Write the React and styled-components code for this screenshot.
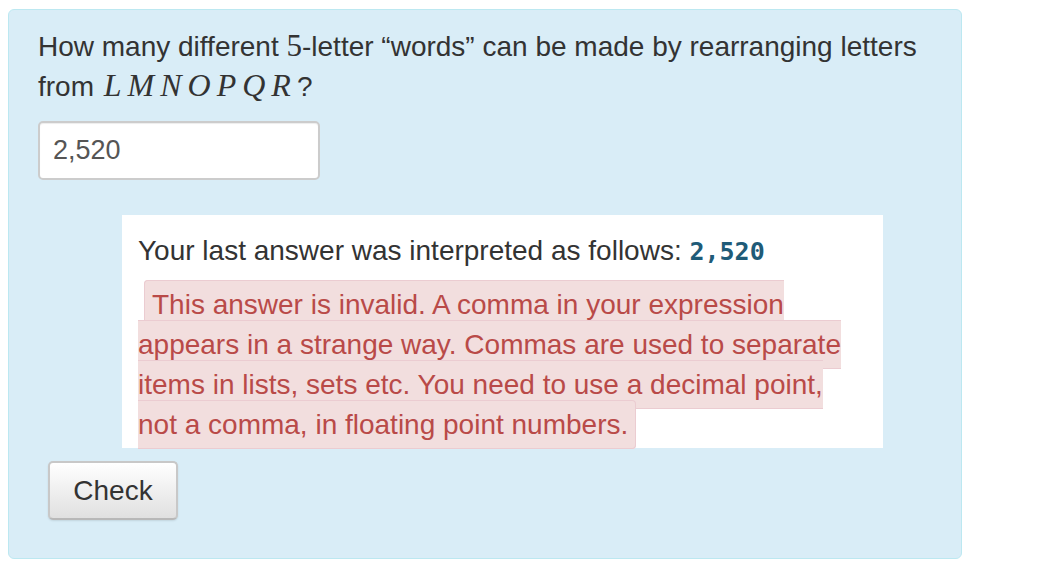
import React from "react";
import styled, { createGlobalStyle } from "styled-components";

const Global = createGlobalStyle`
    body {
        margin: 0;
        background: #fff;
        font-family: "Liberation Sans", Arial, sans-serif;
        color: #333;
    }
`;

const Panel = styled.div`
    margin: 9px 0 0 8px;
    width: 954px;
    box-sizing: border-box;
    padding: 17px 29px 38px;
    background-color: #d9edf7;
    border: 1px solid #bce8f1;
    border-radius: 6px;
    font-size: 28px;
    line-height: 40px;
`;

const Question = styled.p`
    margin: 0;
    color: #333;
`;

const MathNum = styled.span`
    font-family: "Liberation Serif", "Times New Roman", serif;
    font-size: 31px;
    line-height: 1;
`;

const MathVar = styled.span`
    font-family: "Liberation Serif", "Times New Roman", serif;
    font-style: italic;
    font-size: 32px;
    line-height: 1;
    letter-spacing: 6px;
    margin-left: 2px;
`;

const AnswerInput = styled.input`
    display: block;
    margin-top: 14px;
    width: 282px;
    height: 59px;
    box-sizing: border-box;
    padding: 0 13px;
    font-family: "Liberation Sans", Arial, sans-serif;
    font-size: 27px;
    color: #555;
    background: #fff;
    border: 2px solid #ccc;
    border-radius: 5px;
    box-shadow: inset 0 1px 1px rgba(0, 0, 0, 0.075);
    outline: none;
`;

const Feedback = styled.div`
    margin: 35px 0 0 84px;
    width: 761px;
    box-sizing: border-box;
    padding: 16px 25px 3px 16px;
    background: #fff;
`;

const Interpreted = styled.p`
    margin: 0 0 13px;
    color: #333;
`;

const Code = styled.code`
    font-family: "DejaVu Sans Mono", "Liberation Mono", monospace;
    font-weight: bold;
    font-size: 25px;
    color: #1f5b78;
`;

const ErrorText = styled.p`
    margin: 0;
`;

const ErrorSpan = styled.span`
    margin-left: 6px;
    padding: 8px 7px;
    color: #b94a48;
    background-color: #f2dede;
    border: 1px solid #ebccd1;
    border-radius: 4px;
`;

const CheckButton = styled.button`
    display: block;
    margin: 13px 0 0 10px;
    width: 130px;
    height: 59px;
    font-family: "Liberation Sans", Arial, sans-serif;
    font-size: 28px;
    color: #333;
    background-image: linear-gradient(to bottom, #ffffff 0%, #e0e0e0 100%);
    border: 2px solid #c8c8c8;
    border-bottom-color: #b8b8b8;
    border-radius: 5px;
    box-shadow: 0 1px 2px rgba(0, 0, 0, 0.1);
    cursor: pointer;
`;

export default function App() {
    return (
        <>
            <Global />
            <Panel>
                <Question>
                    How many different <MathNum>5</MathNum>-letter “words” can be made by rearranging letters from{" "}
                    <MathVar>LMNOPQR</MathVar>?
                </Question>
                <AnswerInput defaultValue="2,520" />
                <Feedback>
                    <Interpreted>
                        Your last answer was interpreted as follows: <Code>2,520</Code>
                    </Interpreted>
                    <ErrorText>
                        <ErrorSpan>
                            This answer is invalid. A comma in your expression appears in a strange way. Commas are
                            used to separate items in lists, sets etc. You need to use a decimal point, not a comma, in
                            floating point numbers.
                        </ErrorSpan>
                    </ErrorText>
                </Feedback>
                <CheckButton>Check</CheckButton>
            </Panel>
        </>
    );
}
